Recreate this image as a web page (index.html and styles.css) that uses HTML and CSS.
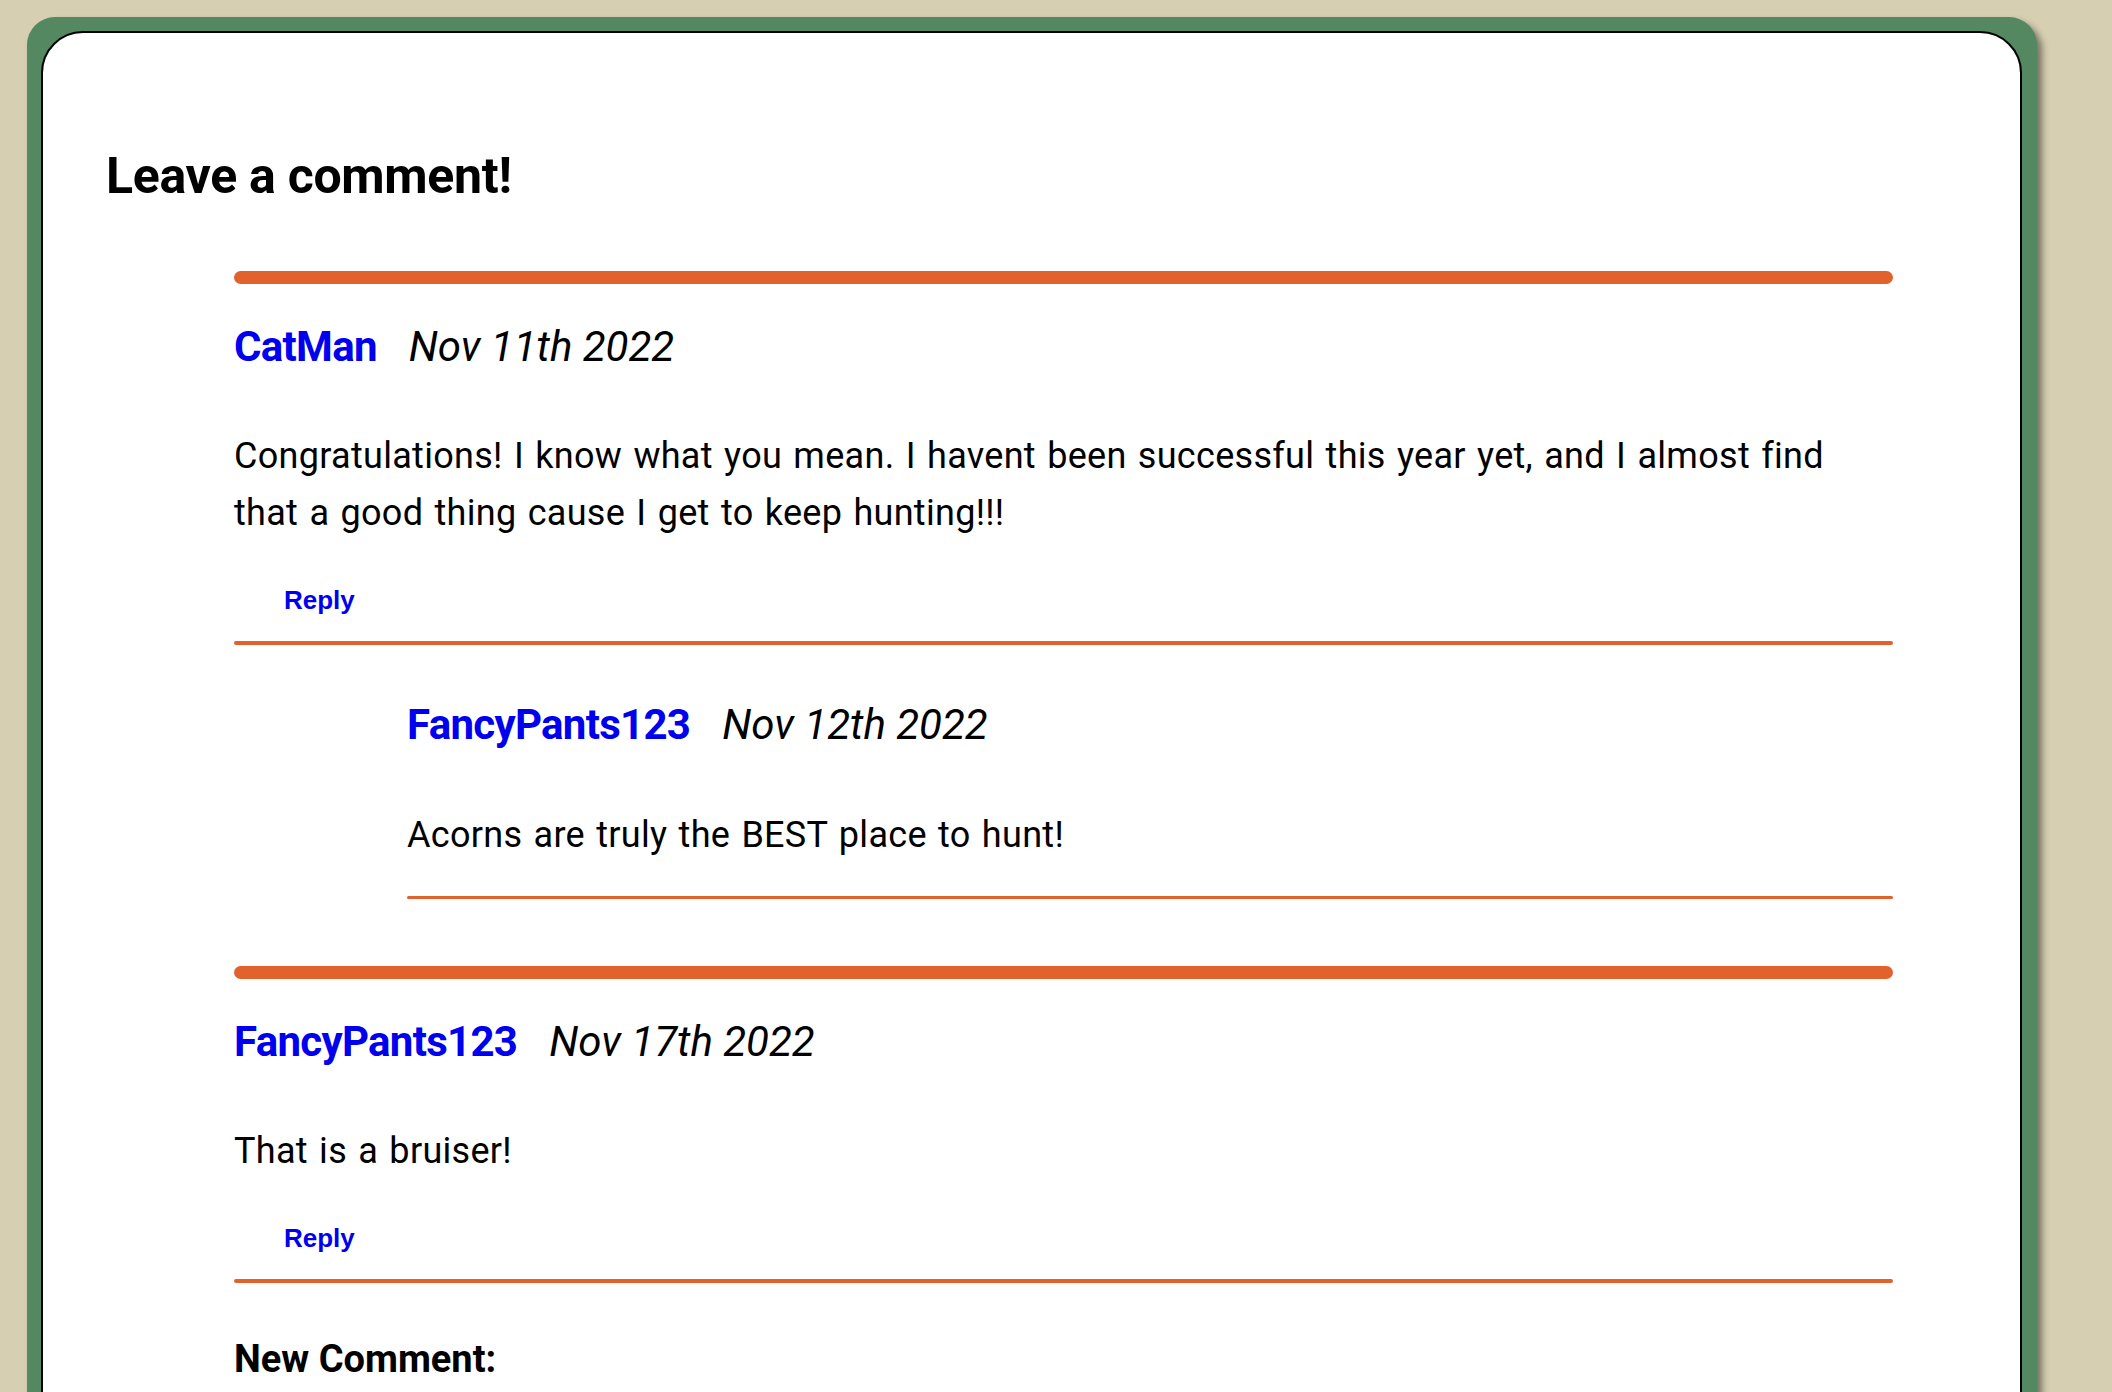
FILE: index.html
```html
<!DOCTYPE html>
<html lang="en">
<head>
<meta charset="utf-8">
<title>Leave a comment!</title>
<link rel="stylesheet" href="styles.css">
</head>
<body>
<div class="frame">
  <div class="card">
    <h2 class="title">Leave a comment!</h2>
    <div class="comments">
      <div class="bar"></div>
      <div class="comment">
        <div class="meta"><a class="author" href="#">CatMan</a><span class="date">Nov 11th 2022</span></div>
        <p class="text">Congratulations! I know what you mean. I havent been successful this year yet, and I almost find that a good thing cause I get to keep hunting!!!</p>
        <a class="reply" href="#">Reply</a>
        <div class="line"></div>
        <div class="nested">
          <div class="meta"><a class="author" href="#">FancyPants123</a><span class="date">Nov 12th 2022</span></div>
          <p class="text">Acorns are truly the BEST place to hunt!</p>
          <div class="line thin"></div>
        </div>
      </div>
      <div class="bar gap"></div>
      <div class="comment">
        <div class="meta"><a class="author" href="#">FancyPants123</a><span class="date">Nov 17th 2022</span></div>
        <p class="text">That is a bruiser!</p>
        <a class="reply" href="#">Reply</a>
        <div class="line"></div>
      </div>
      <h3 class="new">New Comment:</h3>
    </div>
  </div>
</div>
</body>
</html>
```

FILE: styles.css
```css
html, body {
  margin: 0;
  padding: 0;
  background: #d6cfb2;
  height: 100%;
  overflow: hidden;
}

body {
  padding: 17px 0 0 27px;
  font-family: Roboto, "Liberation Sans", sans-serif;
  color: #000;
}

.frame {
  width: 1981px;
  height: 1500px;
  background: #548860;
  border-radius: 28px;
  padding: 14px 15px 0 14px;
  box-shadow: 5px 5px 7px rgba(0, 0, 0, 0.45);
}

.card {
  background: #fff;
  border: 2px solid #000;
  border-radius: 42px;
  height: 1600px;
  padding: 115px 62px 0 63px;
}

.title {
  margin: 0;
  font-size: 50px;
  line-height: 56px;
  font-weight: 700;
  letter-spacing: -0.3px;
}

.comments {
  margin: 67px 65px 0 128px;
}

.bar {
  height: 13px;
  background: #e2622e;
  border-radius: 7px;
}

.bar.gap {
  margin-top: 67px;
}

.meta {
  display: flex;
  align-items: baseline;
  gap: 32px;
  margin-top: 39px;
  font-size: 42px;
  line-height: 48px;
}

.author {
  color: #0000ee;
  font-weight: 700;
  text-decoration: none;
  letter-spacing: -0.7px;
}

.date {
  font-style: italic;
  font-weight: 400;
}

.text {
  margin: 57px 0 0;
  max-width: 1620px;
  font-size: 36px;
  line-height: 57px;
  letter-spacing: 0.3px;
  word-spacing: 2px;
}

.reply {
  display: block;
  margin: 43px 0 0 50px;
  font-family: "Liberation Sans", Arial, sans-serif;
  font-weight: 700;
  font-size: 26px;
  line-height: 30px;
  color: #0000ee;
  text-decoration: none;
}

.line {
  height: 4px;
  background: #e2622e;
  margin-top: 26px;
  border-radius: 2px;
}

.nested {
  margin-left: 173px;
}

.nested .meta {
  margin-top: 56px;
}

.nested .text {
  margin-top: 58px;
}

.line.thin {
  height: 3px;
  margin-top: 32px;
}

.new {
  margin: 54px 0 0;
  font-size: 38px;
  line-height: 44px;
  font-weight: 700;
}
```
